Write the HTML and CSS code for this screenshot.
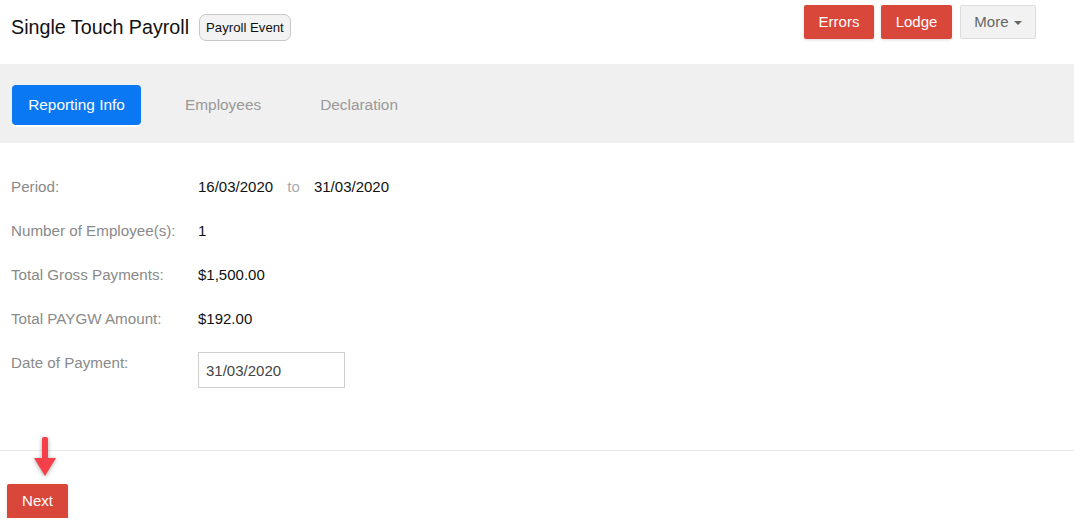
FILE: index.html
```html
<!DOCTYPE html>
<html>
<head>
<meta charset="utf-8">
<link rel="stylesheet" href="styles.css">
</head>
<body>
<header class="top">
  <div class="title-group">
    <h1 class="title">Single Touch Payroll</h1>
    <span class="badge">Payroll Event</span>
  </div>
  <div class="actions">
    <button class="btn btn-red">Errors</button>
    <button class="btn btn-red">Lodge</button>
    <button class="btn btn-grey">More <span class="caret"></span></button>
  </div>
</header>
<nav class="tabs">
  <span class="tab active">Reporting Info</span>
  <span class="tab">Employees</span>
  <span class="tab">Declaration</span>
</nav>
<section class="info">
  <div class="row">
    <div class="label">Period:</div>
    <div class="value">16/03/2020 <span class="to">to</span> 31/03/2020</div>
  </div>
  <div class="row">
    <div class="label">Number of Employee(s):</div>
    <div class="value">1</div>
  </div>
  <div class="row">
    <div class="label">Total Gross Payments:</div>
    <div class="value">$1,500.00</div>
  </div>
  <div class="row">
    <div class="label">Total PAYGW Amount:</div>
    <div class="value">$192.00</div>
  </div>
  <div class="row row-input">
    <div class="label">Date of Payment:</div>
    <div class="value"><input class="date-input" type="text" value="31/03/2020"></div>
  </div>
</section>
<footer class="bottom">
  <div class="arrow">
    <svg width="22" height="40" viewBox="0 0 22 40">
      <rect x="8" y="0" width="6" height="23" rx="2" fill="#f5404a"/>
      <polygon points="0,21 22,21 11,39" fill="#f5404a"/>
    </svg>
  </div>
  <button class="btn btn-red btn-next">Next</button>
</footer>
</body>
</html>
```
FILE: styles.css
```css
* { box-sizing: border-box; }
body {
  margin: 0;
  font-family: "Liberation Sans", Arial, sans-serif;
  color: #111;
  background: #fff;
}
.top {
  height: 64px;
  display: flex;
  justify-content: space-between;
  align-items: flex-start;
  padding: 0 38px 0 11px;
}
.title-group {
  display: flex;
  align-items: center;
  padding-top: 14px;
}
.title {
  margin: 0;
  font-size: 19.7px;
  font-weight: normal;
  color: #111;
  line-height: 25px;
}
.badge {
  margin-left: 10px;
  font-size: 13.2px;
  line-height: 25px;
  padding: 0 6px;
  border: 1px solid #c8c8c8;
  border-radius: 7px;
  background: #f3f3f3;
  color: #111;
}
.actions {
  display: flex;
  gap: 7px;
  padding-top: 5px;
}
.btn {
  font-family: "Liberation Sans", Arial, sans-serif;
  font-size: 15px;
  height: 34px;
  padding: 0 14px;
  border-radius: 2px;
  border: 1px solid transparent;
  cursor: pointer;
  line-height: 30px;
}
.btn-red {
  background: #d9473b;
  color: #fff;
  box-shadow: 0 1px 3px rgba(0,0,0,0.15);
}
.actions .btn-red:first-child { width: 70px; padding: 0; }
.actions .btn-red:nth-child(2) { width: 71px; padding: 0; margin-right: 1px; }
.btn-grey {
  width: 76px;
  padding: 0;
  background: #f2f2f2;
  border-color: #dcdcdc;
  color: #666;
}
.caret {
  display: inline-block;
  width: 0;
  height: 0;
  border-left: 4px solid transparent;
  border-right: 4px solid transparent;
  border-top: 4px solid #666;
  vertical-align: middle;
  margin-left: 1px;
}
.tabs {
  height: 79px;
  background: #f0f0f0;
  display: flex;
  align-items: flex-start;
  padding: 21px 12px 0;
}
.tab {
  font-size: 15.4px;
  color: #999;
  height: 40px;
  line-height: 40px;
  padding: 0 17px;
}
.tab.active {
  background: #0a78f2;
  color: #fff;
  border-radius: 4px;
  width: 129px;
  padding: 0;
  text-align: center;
  margin-right: 27px;
  box-shadow: 0 2px 0 #fff;
}
.tab:nth-child(2) { margin-right: 25px; }
.info {
  padding: 34px 11px 0;
  height: 308px;
  border-bottom: 1px solid #e8e8e8;
}
.row {
  display: flex;
  height: 44px;
  align-items: flex-start;
  font-size: 15px;
  line-height: 20px;
}
.label {
  width: 187px;
  color: #8a8a8a;
  font-size: 15.2px;
}
.value {
  color: #111;
}
.to {
  color: #aaa;
  margin: 0 10px;
}
.row-input .value { margin-top: -1px; }
.date-input {
  width: 147px;
  height: 36px;
  border: 1px solid #cfcfcf;
  padding: 0 7px;
  font-family: "Liberation Sans", Arial, sans-serif;
  font-size: 15px;
  color: #444;
  border-radius: 0;
}
.bottom {
  padding: 0 7px;
  display: flex;
  flex-direction: column;
  align-items: flex-start;
}
.arrow {
  margin: -14px 0 0 27px;
  height: 40px;
  filter: drop-shadow(0 1px 2px rgba(0,0,0,0.35));
}
.btn-next {
  margin-top: 7px;
  width: 61px;
  padding: 0;
  height: 34px;
  border-radius: 2px 2px 0 0;
}
```
